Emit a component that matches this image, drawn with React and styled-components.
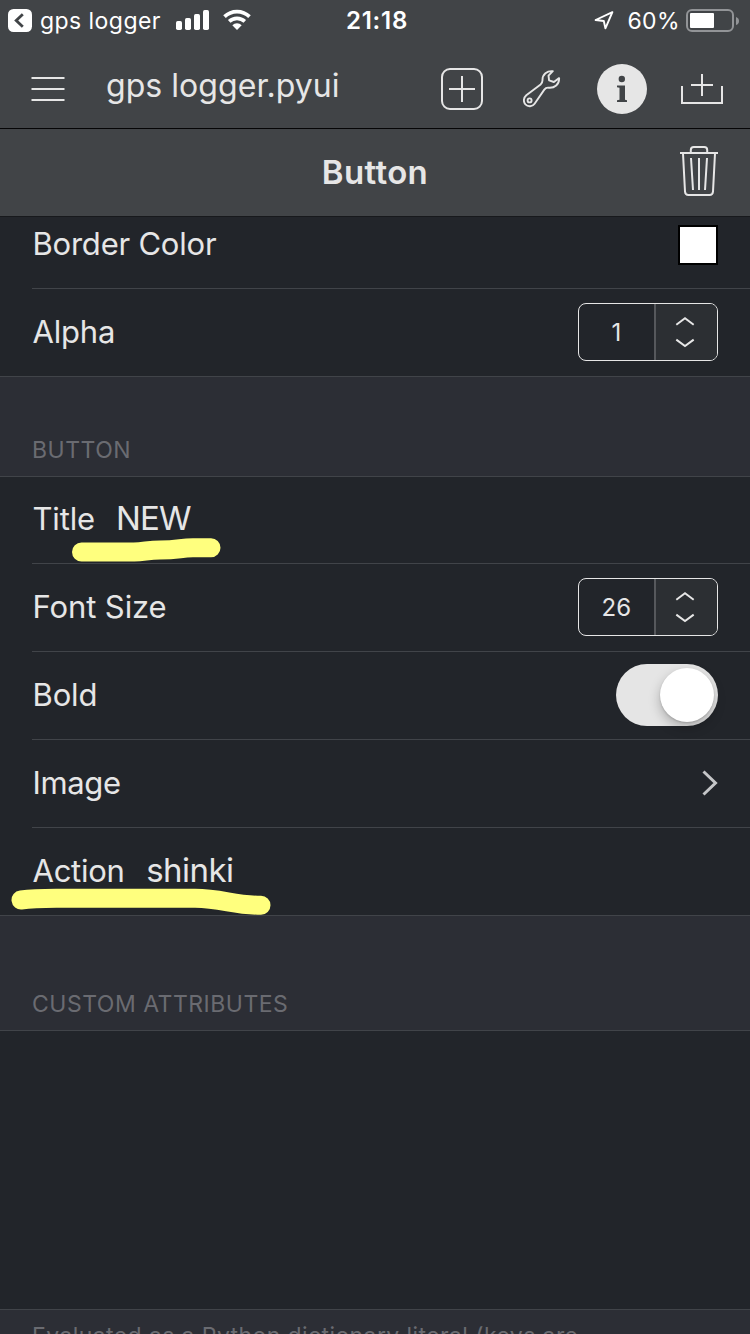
import React from 'react';
import styled, { createGlobalStyle } from 'styled-components';

const GlobalStyle = createGlobalStyle`
  * { box-sizing: border-box; }
  html, body { margin: 0; padding: 0; background: #22252a; }
  body {
    font-family: Inter, "Liberation Sans", sans-serif;
    color: #e6e6e6;
    -webkit-font-smoothing: antialiased;
  }
  svg { display: block; flex: none; }
`;

const Screen = styled.div`
  position: relative;
  width: 750px;
  height: 1334px;
  overflow: hidden;
  background: #22252a;
  display: flex;
  flex-direction: column;
`;

const StatusBar = styled.header`
  height: 40px;
  flex: none;
  background: #414447;
  color: #fff;
  display: grid;
  grid-template-columns: 1fr auto 1fr;
  align-items: center;
  padding: 0 10px 0 8px;
`;

const StatusGroup = styled.div`
  display: flex;
  align-items: center;
  justify-content: ${(p) => (p.$end ? 'flex-end' : 'flex-start')};
`;

const Text = styled.span`
  font-size: 31px;
  letter-spacing: ${(p) => p.$track || 0}px;
  line-height: 40px;
  white-space: nowrap;
  margin-left: 0.5px;
  padding-bottom: ${(p) => p.$lift || 0}px;
`;

const StatusText = styled.span`
  font-size: ${(p) => p.$size || 23}px;
  font-weight: ${(p) => p.$weight || 400};
  letter-spacing: ${(p) => p.$track}px;
  line-height: 38px;
  padding-top: 2px;
  white-space: nowrap;
  margin-left: ${(p) => p.$left}px;
`;

const FieldValue = styled.span`
  padding-bottom: ${(p) => p.$lift}px;
  margin-left: ${(p) => p.$left}px;
  font-size: 33px;
  letter-spacing: ${(p) => p.$track}px;
  line-height: 40px;
`;

const Toolbar = styled.nav`
  height: 89px;
  flex: none;
  background: #414447;
  border-bottom: 1px solid #050506;
  display: flex;
  align-items: center;
  padding: 9px 27px 0 30px;
`;

const FileName = styled.h1`
  flex: 1;
  margin: -5px 0 0 41px;
  font-size: 32px;
  font-weight: 400;
  letter-spacing: 0.05px;
  line-height: 40px;
`;

const ToolbarActions = styled.div`
  display: flex;
  align-items: center;
`;

const ToolButton = styled.button`
  border: 0;
  padding: 0;
  background: none;
  color: #e6e6e6;
  display: flex;
  align-items: center;
  justify-content: center;
  width: ${(p) => p.$width}px;
  height: 52px;
  margin-left: ${(p) => p.$gap || 0}px;
`;

const InfoBadge = styled.span`
  width: 50px;
  height: 50px;
  border-radius: 50%;
  background: #e6e6e6;
`;

const PanelHeader = styled.div`
  height: 88px;
  flex: none;
  background: #414447;
  border-bottom: 1px solid #17191c;
  display: grid;
  grid-template-columns: 1fr auto 1fr;
  align-items: center;
  padding: 0 32px 3px;
`;

const PanelTitle = styled.h2`
  grid-column: 2;
  margin: 0;
  padding-top: 2px;
  font-size: 33px;
  font-weight: 600;
  letter-spacing: 0.35px;
  line-height: 40px;
`;

const DeleteButton = styled(ToolButton)`
  justify-self: end;
`;

const List = styled.section`
  flex: none;
  padding-left: 32px;
  border-bottom: 1px solid #414449;
`;

const Row = styled.div`
  height: ${(p) => p.$height || 88}px;
  padding: 0 32px ${(p) => p.$bottom || 1}px 0;
  display: flex;
  align-items: center;
  border-bottom: 1px solid #414449;
  &:last-child { border-bottom: 0; height: ${(p) => (p.$height || 88) - 1}px; }
`;

const Trailing = styled.div`
  margin-left: auto;
  display: flex;
`;

const SectionHeading = styled.h3`
  flex: none;
  margin: 0;
  height: ${(p) => p.$height}px;
  padding: 0 0 11px 32px;
  display: flex;
  align-items: flex-end;
  background: #2c2e35;
  border-bottom: 1px solid #414449;
  color: #6a6b71;
  font-size: 23px;
  font-weight: 400;
  letter-spacing: 0.5px;
  line-height: 30px;
`;

const Swatch = styled.span`
  width: 40px;
  height: 40px;
  border: 2px solid #000;
  background: #fff;
`;

const StepperFrame = styled.div`
  width: 140px;
  height: 58px;
  border: 1px solid #e6e6e6;
  border-radius: 8px;
  display: flex;
  overflow: hidden;
`;

const StepperValue = styled.span`
  width: 75px;
  text-align: center;
  font-size: 24px;
  letter-spacing: 0.3px;
  line-height: 58px;
`;

const StepperButtons = styled.div`
  flex: 1;
  display: flex;
  align-items: center;
  justify-content: center;
  padding: 0 3px 1px 0;
  background: #2c2f33;
  border-left: 2px solid #56585c;
`;

const Switch = styled.span`
  width: 102px;
  height: 62px;
  border-radius: 31px;
  background: #e5e5e5;
  display: flex;
  align-items: center;
  justify-content: flex-end;
  padding: 0 4px;
`;

const Knob = styled.span`
  width: 54px;
  height: 54px;
  border-radius: 50%;
  background: #fff;
  box-shadow: 0 5px 12px rgba(0, 0, 0, 0.25), 0 1px 2px rgba(0, 0, 0, 0.15);
`;

const AttributesField = styled.div`
  height: 279px;
  flex: none;
  border-bottom: 1px solid #414449;
`;

const FootNote = styled.p`
  flex: 1;
  margin: 0;
  padding: 13px 0 0 32px;
  background: #2c2e35;
  color: #6a6b71;
  font-size: 23px;
  letter-spacing: 0.4px;
  line-height: 26px;
  white-space: nowrap;
  overflow: hidden;
`;

const Marker = styled.svg`
  position: absolute;
  left: 0;
  top: 0;
  pointer-events: none;
`;

const SignalIcon = styled.svg`
  margin-left: 15px;
`;

const WifiIcon = styled.svg`
  margin-left: 13px;
`;

const BatteryIcon = styled.svg`
  margin-left: 6px;
`;

const Stepper = ({ value }) => (
  <StepperFrame>
    <StepperValue>{value}</StepperValue>
    <StepperButtons>
      <svg width="20" height="32" viewBox="0 0 20 32" fill="none" stroke="#e6e6e6" strokeWidth="2">
        <path d="M1.3 8.7 10 2.3l8.7 6.4M1.3 23.6 10 30l8.7-6.4" />
      </svg>
    </StepperButtons>
  </StepperFrame>
);

const Signal = () => (
  <SignalIcon width="34" height="20" viewBox="0 0 34 20" fill="#fff">
    <rect x="0" y="11" width="6" height="9" rx="1.7" />
    <rect x="9" y="8" width="6" height="12" rx="1.7" />
    <rect x="18" y="4" width="6" height="16" rx="1.7" />
    <rect x="27" y="0" width="6" height="20" rx="1.7" />
  </SignalIcon>
);

const Wifi = () => (
  <WifiIcon width="28" height="22" viewBox="0 0 28 22" fill="none" stroke="#fff" strokeWidth="3.7">
    <path d="M1.5 7.6a18 18 0 0 1 25 0M6.2 12.4a11.4 11.4 0 0 1 15.6 0" />
    <path d="M9.3 16.2a6.9 6.9 0 0 1 9.4 0L14 21z" fill="#fff" stroke="none" />
  </WifiIcon>
);

export default function App() {
  return (
    <>
      <GlobalStyle />
      <Screen>
        <StatusBar>
          <StatusGroup>
            <svg width="24" height="24" viewBox="0 0 24 24">
              <rect y="1" width="24" height="23" rx="5.5" fill="#fff" />
              <path d="M14.8 6.2 8.2 12.5l6.6 6.3" fill="none" stroke="#414447" strokeWidth="2.8" />
            </svg>
            <StatusText $left={8} $track={0.45}>gps logger</StatusText>
            <Signal />
            <Wifi />
          </StatusGroup>
          <StatusText $size={24} $weight={600} $track={0.75} $left={6}>21:18</StatusText>
          <StatusGroup $end>
            <svg width="20" height="20" viewBox="0 0 20 20" fill="none" stroke="#fff" strokeWidth="1.9" strokeLinejoin="round">
              <path d="M18.4 2.2 1.6 10l8.2 1 1.6 7.4z" />
            </svg>
            <StatusText $left={13} $track={0.4}>60%</StatusText>
            <BatteryIcon width="54" height="24" viewBox="0 0 54 24">
              <rect x="1" y="2" width="46" height="21" rx="5" fill="none" stroke="#929497" strokeWidth="2" />
              <rect x="4" y="5" width="24" height="15" rx="1" fill="#fff" />
              <path d="M50 9q3 1 3 4t-3 4z" fill="#929497" />
            </BatteryIcon>
          </StatusGroup>
        </StatusBar>

        <Toolbar>
          <ToolButton $width={35} aria-label="Menu">
            <svg width="34" height="26" viewBox="0 0 34 26" fill="#e6e6e6">
              <rect x="0.5" y="1" width="33" height="2" />
              <rect x="0.5" y="12" width="33" height="2" />
              <rect x="0.5" y="23" width="33" height="2" />
            </svg>
          </ToolButton>
          <FileName>gps logger.pyui</FileName>
          <ToolbarActions>
            <ToolButton $width={42} aria-label="Add">
              <svg width="42" height="42" viewBox="0 0 42 42" fill="none" stroke="#e6e6e6" strokeWidth="2">
                <rect x="1" y="1" width="40" height="40" rx="8" />
                <path d="M8 21h26M21 8v26" />
              </svg>
            </ToolButton>
            <ToolButton $width={38} $gap={40} aria-label="Tools">
              <svg width="38" height="38" viewBox="0 0 38 38" fill="none" stroke="#e6e6e6" strokeWidth="1.9" strokeLinejoin="round">
                <path d="M29.8 1.2C24 .6 19.4 4.5 19.5 10c.1 2-.4 3.2-1.9 4.400L3.300 25.200C.5 27.600.1 31.800 2.400 34.400c2.600 2.700 7 2.400 9.200-.7L21.300 19.600c1.200-1.600 2.200-2.100 4.200-1.900 6 .7 10.900-3.500 10.600-9.600l-5.200 3.900-4.800-1.600-.6-4.700z" />
                <circle cx="6.6" cy="30.4" r="2" />
              </svg>
            </ToolButton>
            <ToolButton $width={50} $gap={36} aria-label="Info">
              <InfoBadge>
                <svg width="50" height="50" viewBox="0 0 50 50" fill="#414447">
                  <circle cx="24.8" cy="15" r="3.2" />
                  <path d="M20 21.5h8v14.200l2 .5V38H20v-1.800l2.500-.5V23.800L20 23.300z" />
                </svg>
              </InfoBadge>
            </ToolButton>
            <ToolButton $width={42} $gap={34} aria-label="Add to tray">
              <svg width="42" height="32" viewBox="0 0 42 32" fill="none" stroke="#e6e6e6" strokeWidth="2">
                <path d="M1 13v17h40V13M10 12h22M21 1v22" />
              </svg>
            </ToolButton>
          </ToolbarActions>
        </Toolbar>

        <PanelHeader>
          <PanelTitle>Button</PanelTitle>
          <DeleteButton $width={38} aria-label="Delete">
            <svg width="38" height="50" viewBox="0 0 38 50" fill="none" stroke="#e6e6e6" strokeWidth="2">
              <path d="M0 7h38M10.8 6.500V4q0-3 3-3h10.400q3 0 3 3v2.500M3 7.500l2 38q.2 3.500 3.500 3.500h21q3.300 0 3.500-3.500l2-38M11 12l2 32M19 12v32M27 12l-2 32" />
            </svg>
          </DeleteButton>
        </PanelHeader>

        <List>
          <Row $height={72} $bottom={15}>
            <Text $track={-0.22} $lift={2}>Border Color</Text>
            <Trailing><Swatch /></Trailing>
          </Row>
          <Row>
            <Text $track={-0.2}>Alpha</Text>
            <Trailing><Stepper value="1" /></Trailing>
          </Row>
        </List>

        <SectionHeading $height={100}>BUTTON</SectionHeading>
        <List>
          <Row $height={87}>
            <Text $track={-0.15} $lift={2}>Title</Text>
            <FieldValue $left={21} $track={-0.9} $lift={3}>NEW</FieldValue>
          </Row>
          <Row>
            <Text $track={-0.1}>Font Size</Text>
            <Trailing><Stepper value="26" /></Trailing>
          </Row>
          <Row>
            <Text $track={-0.15}>Bold</Text>
            <Trailing><Switch><Knob /></Switch></Trailing>
          </Row>
          <Row>
            <Text $track={-0.35}>Image</Text>
            <Trailing>
              <svg width="16" height="26" viewBox="0 0 16 26" fill="none" stroke="#c5c6c8" strokeWidth="3">
                <path d="M1.5 1.5 13.500 13l-12 11.500" />
              </svg>
            </Trailing>
          </Row>
          <Row>
            <Text $track={-0.25}>Action</Text>
            <FieldValue $left={21.5} $track={-0.55} $lift={2}>shinki</FieldValue>
          </Row>
        </List>

        <SectionHeading $height={115}>CUSTOM ATTRIBUTES</SectionHeading>
        <AttributesField />
        <FootNote>Evaluated as a Python dictionary literal (keys are</FootNote>

        <Marker width="750" height="1334" viewBox="0 0 750 1334" fill="none" stroke="#ffff7e" strokeWidth="19" strokeLinecap="round" strokeLinejoin="round">
          <path d="M81.5 552H134C145 551.5 149 550 160 550C179 550 180 547.8 193 547.8H211" />
          <path d="M21 900C34 898.5 44 898.5 60 898.3H195C222 898.5 234 905.300 261 905.300" />
        </Marker>
      </Screen>
    </>
  );
}
